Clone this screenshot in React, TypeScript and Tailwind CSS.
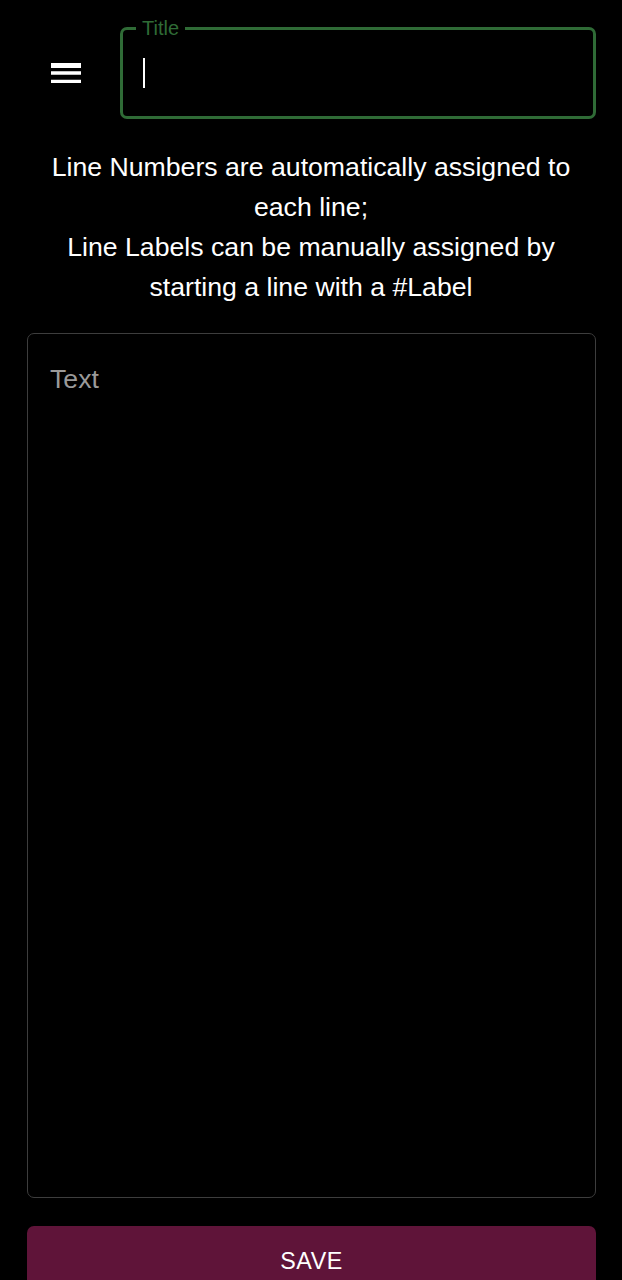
import { useState } from "react";

function MenuIcon() {
  return (
    <svg viewBox="0 0 24 24" className="h-10 w-10 fill-white">
      <path d="M3 18h18v-2H3v2zm0-5h18v-2H3v2zm0-6v2h18V6H3z" />
    </svg>
  );
}

export default function App() {
  const [title, setTitle] = useState("");
  const [text, setText] = useState("");

  return (
    <div className="min-h-screen bg-black text-white font-['Liberation_Sans',Arial,sans-serif]">
      <div className="flex items-center pt-[27px] pl-[46px] pr-[26px]">
        <button className="flex h-10 w-10 items-center justify-center">
          <MenuIcon />
        </button>
        <div className="relative ml-[34px] h-[92px] flex-1 rounded-[7px] border-[3px] border-[#2f6b36]">
          <span className="absolute -top-[12px] left-[13px] bg-black px-[6px] text-[20px] leading-[20px] text-[#2f6b36]">
            Title
          </span>
          <div className="flex h-full items-center pl-[20px]">
            <span className="h-[30px] w-[2px] bg-white" />
            <input
              value={title}
              onChange={(e) => setTitle(e.target.value)}
              className="w-full bg-transparent text-[26.67px] text-white outline-none"
            />
          </div>
        </div>
      </div>

      <p className="mt-[28px] px-[40px] text-center text-[26.67px] leading-[40px]">
        Line Numbers are automatically assigned to each line;
        <br />
        Line Labels can be manually assigned by starting a line with a #Label
      </p>

      <div className="mx-[26px] mt-[26px] ml-[27px]">
        <textarea
          value={text}
          onChange={(e) => setText(e.target.value)}
          placeholder="Text"
          className="block h-[865px] w-full resize-none rounded-[7px] border-[1.67px] border-[#3d3d3d] bg-black px-[22px] pt-[26px] text-[26.67px] leading-[38px] text-white outline-none placeholder:text-[#9a9a9a]"
        />
        <button className="mt-[28px] flex h-[70px] w-full items-center justify-center rounded-[7px] bg-[#5f1439] text-[23.3px] font-medium tracking-[0.5px] text-white">
          SAVE
        </button>
      </div>
    </div>
  );
}
